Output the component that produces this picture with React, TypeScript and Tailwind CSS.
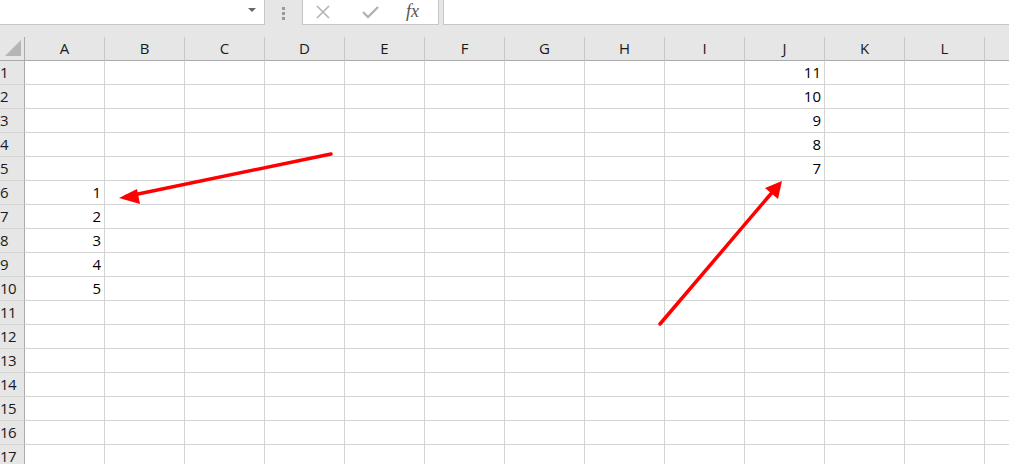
import React from 'react';

const cols = ['A', 'B', 'C', 'D', 'E', 'F', 'G', 'H', 'I', 'J', 'K', 'L', 'M'];
const rows = Array.from({ length: 17 }, (_, i) => i + 1);

// cell values keyed by "COLROW"
const values: Record<string, string> = {
  A6: '1',
  A7: '2',
  A8: '3',
  A9: '4',
  A10: '5',
  J1: '11',
  J2: '10',
  J3: '9',
  J4: '8',
  J5: '7',
};

const FormulaBar: React.FC = () => (
  <div className="flex h-[25px] bg-[#e6e6e6]">
    {/* Name box */}
    <div className="relative w-[265px] bg-white border-r border-b border-[#c6c6c6]">
      <svg className="absolute left-[248px] top-[8px]" width="8" height="5" viewBox="0 0 8 5">
        <path d="M0 0 L8 0 L4 4 Z" fill="#666" />
      </svg>
    </div>
    {/* Grip dots */}
    <div className="flex w-[37px] flex-col items-center justify-center gap-[2px] pt-[1px]">
      <span className="block h-[3px] w-[3px] bg-[#9a9a9a]" />
      <span className="block h-[3px] w-[3px] bg-[#9a9a9a]" />
      <span className="block h-[3px] w-[3px] bg-[#9a9a9a]" />
    </div>
    {/* Cancel / enter / fx */}
    <div className="flex w-[137px] items-center border-l border-r border-b border-[#c6c6c6] bg-white">
      <svg className="ml-[13px]" width="14" height="14" viewBox="0 0 14 14">
        <path d="M1 1 L13 13 M13 1 L1 13" stroke="#b3b3b3" strokeWidth="1.6" />
      </svg>
      <svg className="ml-[32px]" width="17" height="14" viewBox="0 0 17 14">
        <path d="M1 7 L6 12 L16 2" stroke="#b3b3b3" strokeWidth="2.4" fill="none" />
      </svg>
      <span
        className="ml-[27px] pb-[3px] text-[18px] italic leading-none text-[#555]"
        style={{ fontFamily: '"Liberation Serif", "DejaVu Serif", serif' }}
      >
        fx
      </span>
    </div>
    <div className="w-[4px]" />
    {/* Formula input */}
    <div className="flex-1 bg-white border-l border-b border-[#c6c6c6]" />
  </div>
);

const Sheet: React.FC = () => (
  <div className="grid grid-cols-[25px_repeat(13,80px)]">
    {/* Corner */}
    <div className="relative h-[24px] bg-[#e6e6e6] border-r border-b border-[#ababab]">
      <svg className="absolute left-[5px] top-[3px]" width="17" height="17" viewBox="0 0 17 17">
        <path d="M16 0 L16 16 L0 16 Z" fill="#b5b5b5" />
      </svg>
    </div>
    {cols.map((c) => (
      <div
        key={c}
        className="flex h-[24px] items-center justify-center bg-[#e6e6e6] border-r border-r-[#c8c8c8] border-b border-b-[#ababab] text-[15px] text-[#1a1a1a]"
      >
        {/* M sits past the window edge; its letter is not visible */}
        {c === 'M' ? '' : c}
      </div>
    ))}
    {rows.map((r) => (
      <React.Fragment key={r}>
        <div className="flex h-[24px] items-end bg-[#e6e6e6] border-r border-r-[#ababab] border-b border-b-[#d4d4d4] pb-[4px] text-[15px] leading-none tracking-[-0.5px] text-[#1a1a1a]">
          {r}
        </div>
        {cols.map((c) => (
          <div
            key={c + r}
            className="flex h-[24px] items-end justify-end border-r border-b border-[#d4d4d4] bg-white pb-[4px] pr-[3px] text-[15px] leading-none text-black"
          >
            {values[c + r] ?? ''}
          </div>
        ))}
      </React.Fragment>
    ))}
  </div>
);

const Arrows: React.FC = () => (
  <svg className="pointer-events-none absolute left-0 top-0" width="1009" height="464">
    <line x1="331" y1="154" x2="126" y2="196.5" stroke="#ff0000" strokeWidth="3.5" strokeLinecap="round" />
    <path d="M119 198 L137 189 L140 204 Z" fill="#ff0000" />
    <line x1="660" y1="324" x2="775" y2="189" stroke="#ff0000" strokeWidth="3.5" strokeLinecap="round" />
    <path d="M782 181 L778 199 L765 188 Z" fill="#ff0000" />
  </svg>
);

export default function App() {
  return (
    <div
      className="relative h-[464px] w-[1009px] overflow-hidden bg-[#e6e6e6]"
      style={{ fontFamily: '"Open Sans", "Noto Sans", Arial, sans-serif' }}
    >
      <FormulaBar />
      <div className="h-[12px]" />
      <Sheet />
      <Arrows />
    </div>
  );
}
